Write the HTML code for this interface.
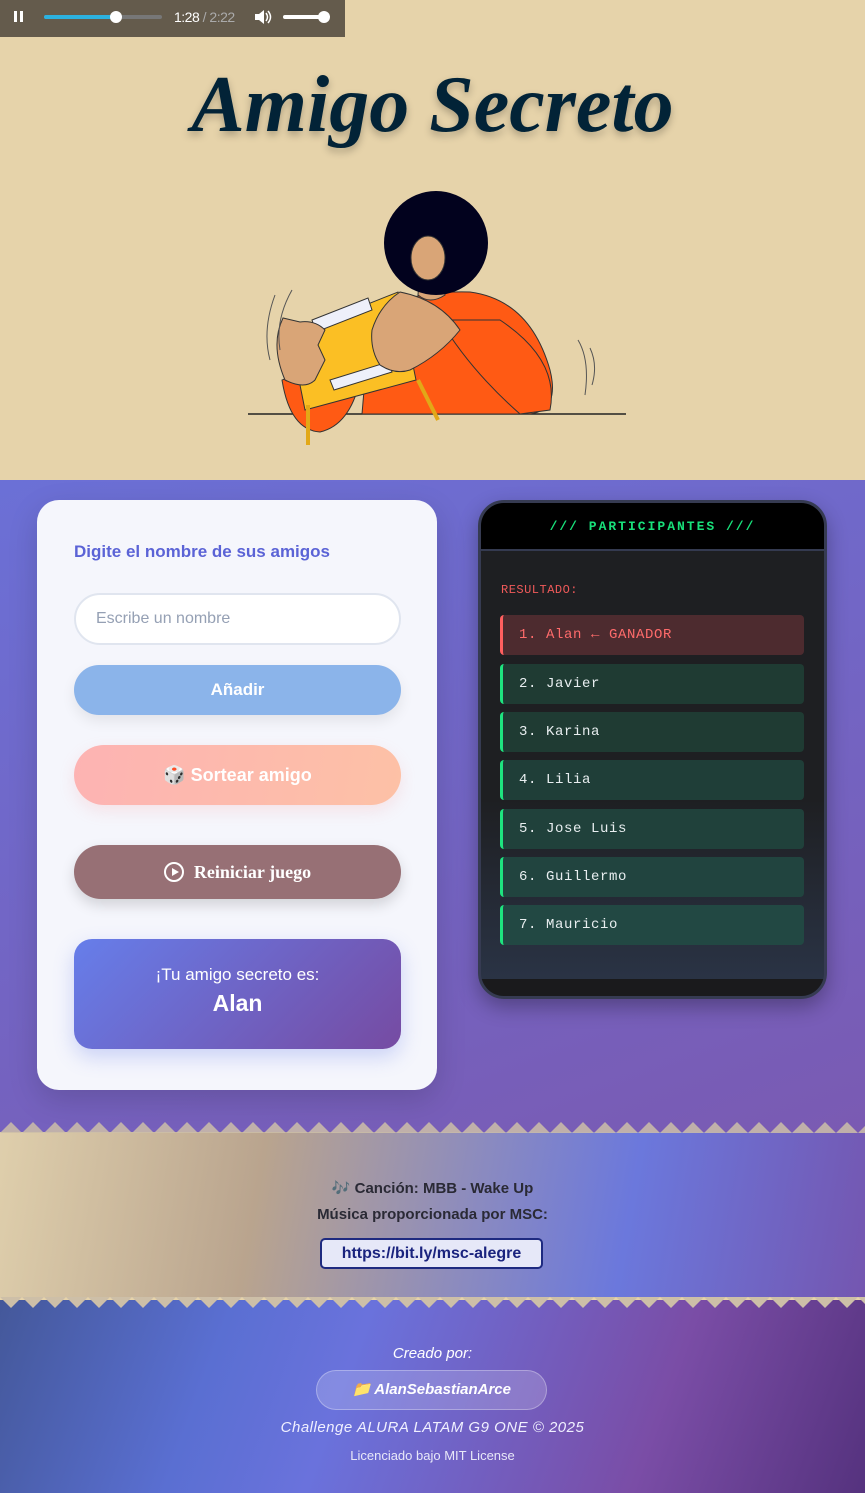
<!DOCTYPE html>
<html><head><meta charset="utf-8"><style>
*{margin:0;padding:0;box-sizing:border-box}
body{width:865px;height:1493px;overflow:hidden;font-family:"Liberation Sans",sans-serif;background:#e6d3aa;position:relative}
.abs{position:absolute}
.top{left:0;top:0;width:865px;height:480px;background:#e6d3aa}
.player{left:0;top:0;width:345px;height:37px;background:#645b4c}
h1{position:absolute;left:0;width:865px;top:60px;text-align:center;font-family:"Liberation Serif",serif;font-style:italic;font-weight:bold;font-size:80px;color:#022337;text-shadow:0 4px 8px rgba(0,0,0,.25)}
.main{left:0;top:480px;width:865px;height:660px;background:linear-gradient(160deg,#6b70d6,#7a5ab2)}
.card{left:37px;top:500px;width:400px;height:590px;background:#f5f6fc;border-radius:22px;box-shadow:0 10px 30px rgba(0,0,0,.15)}
.btn{position:absolute;left:37px;width:327px;border-radius:30px;color:#fff;font-weight:bold;text-align:center;font-size:17px}
.panel{left:478px;top:500px;width:349px;height:499px;border-radius:26px;border:3px solid #363b52;background:linear-gradient(#1e1f22 60%,#2b3548);overflow:hidden;box-shadow:0 8px 20px rgba(0,0,0,.3)}
.ph{height:48px;background:#000;border-bottom:2px solid #343a50;color:#18e07a;font-family:"Liberation Mono",monospace;font-weight:bold;font-size:13px;text-align:center;line-height:48px;letter-spacing:2px}
.it{position:absolute;left:19px;width:304px;height:40px;border-radius:4px;border-left:3px solid #1ee47f;background:#1f3b33;color:#e8eef0;font-family:"Liberation Mono",monospace;font-size:14px;line-height:40px;padding-left:16px;letter-spacing:.6px}
.band{left:0;top:1132px;width:865px;height:165px;background:linear-gradient(100deg,#dfcfac 0%,#b9a48e 30%,#8a8ac0 55%,#6b78dc 72%,#7456b0 100%)}
.foot{left:0;top:1300px;width:865px;height:193px;background:linear-gradient(110deg,#44589a 0%,#5a6fd2 25%,#6a72dc 40%,#7a4da6 75%,#55327e 100%)}
.ctr{position:absolute;left:0;width:865px;text-align:center}
</style></head><body>
<div class="abs top"></div>
<div class="abs player">
<div class="abs" style="left:14px;top:11px;width:3px;height:11px;background:#fff"></div>
<div class="abs" style="left:20px;top:11px;width:3px;height:11px;background:#fff"></div>
<div class="abs" style="left:44px;top:15px;width:118px;height:4px;background:#777;border-radius:2px"></div>
<div class="abs" style="left:44px;top:15px;width:72px;height:4px;background:#2cb2e0;border-radius:2px"></div>
<div class="abs" style="left:110px;top:11px;width:12px;height:12px;background:#fff;border-radius:50%"></div>
<div class="abs" style="left:174px;top:9px;font-size:14px;color:#fff;letter-spacing:-.5px">1:28 <span style="color:#aaa">/ 2:22</span></div>
<svg class="abs" style="left:254px;top:9px" width="18" height="16"><path d="M1 5h4l5-4v14l-5-4H1z" fill="#fff"/><path d="M12 4q3 4 0 8M14 2q5 6 0 12" stroke="#fff" fill="none" stroke-width="1.5"/></svg>
<div class="abs" style="left:283px;top:15px;width:44px;height:4px;background:#fff;border-radius:2px"></div>
<div class="abs" style="left:318px;top:11px;width:12px;height:12px;background:#fff;border-radius:50%"></div>
</div>
<h1>Amigo Secreto</h1>
<svg class="abs" style="left:240px;top:190px" width="400" height="260" viewBox="240 190 400 260">
<line x1="248" y1="414" x2="626" y2="414" stroke="#222" stroke-width="1.5"/>
<path d="M362 414 L370 320 Q400 290 470 292 Q530 300 550 370 Q560 410 530 414 Z" fill="#ff5a14" stroke="#333"/>
<path d="M282 380 Q290 430 320 432 Q350 425 360 380 L330 360Z" fill="#ff5a14" stroke="#333"/>
<path d="M440 320 Q470 370 520 414 L550 410 Q560 360 500 320Z" fill="#ff5a14" stroke="#333"/>
<path d="M420 268 L418 295 Q430 305 445 295 L442 268Z" fill="#d9a577" stroke="#333"/>
<circle cx="436" cy="243" r="52" fill="#02021e"/>
<ellipse cx="428" cy="258" rx="17" ry="22" fill="#d9a577" stroke="#333"/>
<path d="M290 335 L398 292 L416 380 L305 410Z" fill="#fbbf24" stroke="#333"/>
<path d="M312 320 L368 298 L372 310 L316 332Z" fill="#eef0fa" stroke="#333"/>
<path d="M330 380 L388 362 L392 372 L334 390Z" fill="#eef0fa" stroke="#333"/>
<line x1="308" y1="405" x2="308" y2="445" stroke="#e2a817" stroke-width="4"/>
<line x1="418" y1="380" x2="438" y2="420" stroke="#e2a817" stroke-width="4"/>
<path d="M283 318 Q270 345 285 380 Q305 390 315 380 L325 360 L318 345 L325 330 Q315 320 300 322Z" fill="#d9a577" stroke="#333"/>
<path d="M400 292 Q380 305 372 330 Q370 350 380 365 Q395 375 410 370 Q440 355 460 330 Q440 300 400 292Z" fill="#d9a577" stroke="#333"/>
<path d="M275 295 Q262 330 270 360M292 290 Q275 320 280 350M578 340 Q590 360 585 395M590 348 Q598 365 592 385" stroke="#555" fill="none"/>
</svg>
<div class="abs main"></div>
<div class="abs card">
<div class="abs" style="left:37px;top:42px;font-size:17px;font-weight:bold;color:#5b63d6">Digite el nombre de sus amigos</div>
<div class="abs" style="left:37px;top:93px;width:327px;height:52px;border:2px solid #e0e5ef;border-radius:26px;background:#fff;color:#95a0b4;font-size:16px;line-height:48px;padding-left:20px">Escribe un nombre</div>
<div class="btn" style="top:165px;height:50px;line-height:50px;background:#8bb4ea;box-shadow:0 6px 14px rgba(0,0,0,.08)">Añadir</div>
<div class="btn" style="top:245px;height:60px;line-height:60px;background:linear-gradient(100deg,#fdb3b3,#fdc1a6);font-size:18px;box-shadow:0 6px 16px rgba(250,150,150,.2)">🎲 Sortear amigo</div>
<div class="btn" style="top:345px;height:54px;line-height:54px;background:#977075;font-family:'Liberation Serif',serif;font-size:18px;box-shadow:0 6px 14px rgba(0,0,0,.15)"><span style="display:inline-block;width:20px;height:20px;border:2px solid #fff;border-radius:50%;vertical-align:-4px;margin-right:10px;position:relative"><span style="position:absolute;left:6px;top:4px;border-left:7px solid #fff;border-top:4px solid transparent;border-bottom:4px solid transparent"></span></span>Reiniciar juego</div>
<div class="btn" style="top:439px;height:110px;border-radius:18px;background:linear-gradient(135deg,#667eea,#764ba2);box-shadow:0 8px 20px rgba(102,126,234,.3)">
<div style="margin-top:26px;font-weight:normal;font-size:17px">¡Tu amigo secreto es:</div>
<div style="font-size:23px;margin-top:5px">Alan</div></div>
</div>
<div class="abs panel">
<div class="ph">/// PARTICIPANTES ///</div>
<div class="abs" style="left:20px;top:80px;color:#f05a5a;font-family:'Liberation Mono',monospace;font-size:12px;letter-spacing:.5px">RESULTADO:</div>
<div class="it" style="top:112px;background:#4d2b2f;border-color:#ff5f5f;color:#ff6b6b">1. Alan ← GANADOR</div>
<div class="it" style="top:161px">2. Javier</div>
<div class="it" style="top:209px">3. Karina</div>
<div class="it" style="top:257px;background:#1f3e38">4. Lilia</div>
<div class="it" style="top:306px;background:#20413b">5. Jose Luis</div>
<div class="it" style="top:354px;background:#21443f">6. Guillermo</div>
<div class="it" style="top:402px;background:#224843">7. Mauricio</div>
<div class="abs" style="left:0;top:476px;width:349px;height:20px;background:#1a1a1c"></div>
</div>
<div class="abs band"></div>
<svg class="abs" style="left:0;top:1122px" width="865" height="11"><defs><pattern id="z" width="22" height="11" patternUnits="userSpaceOnUse"><path d="M0 11L11 0L22 11Z" fill="#cdbfa8" opacity=".85"/></pattern></defs><rect width="865" height="11" fill="url(#z)"/></svg>
<div class="abs foot"></div>
<svg class="abs" style="left:0;top:1297px" width="865" height="11"><defs><pattern id="z2" width="22" height="11" patternUnits="userSpaceOnUse"><path d="M0 0L11 11L22 0Z" fill="#cdbfa8"/></pattern></defs><rect width="865" height="11" fill="url(#z2)"/></svg>
<div class="ctr" style="top:1179px;font-size:15px;font-weight:bold;color:#2a2a35">🎶 Canción: MBB - Wake Up</div>
<div class="ctr" style="top:1206px;font-size:15px;font-weight:bold;color:#2a2a35">Música proporcionada por MSC:</div>
<div class="abs" style="left:320px;top:1238px;width:223px;height:31px;border:2px solid #1e2a80;border-radius:5px;background:#e6e8f8;color:#1a237e;font-weight:bold;font-size:16px;text-align:center;line-height:27px">https://bit.ly/msc-alegre</div>
<div class="ctr" style="top:1345px;font-size:15px;font-style:italic;color:#fff">Creado por:</div>
<div class="abs" style="left:316px;top:1370px;width:231px;height:40px;border-radius:20px;background:rgba(255,255,255,.18);border:1.5px solid rgba(255,255,255,.3);color:#fff;font-weight:bold;font-style:italic;font-size:15px;text-align:center;line-height:37px">📁 AlanSebastianArce</div>
<div class="ctr" style="top:1419px;font-size:15px;font-style:italic;color:#f0f0ff;letter-spacing:.5px">Challenge ALURA LATAM G9 ONE © 2025</div>
<div class="ctr" style="top:1448px;font-size:13px;color:#e8e8f8">Licenciado bajo MIT License</div>
</body></html>
